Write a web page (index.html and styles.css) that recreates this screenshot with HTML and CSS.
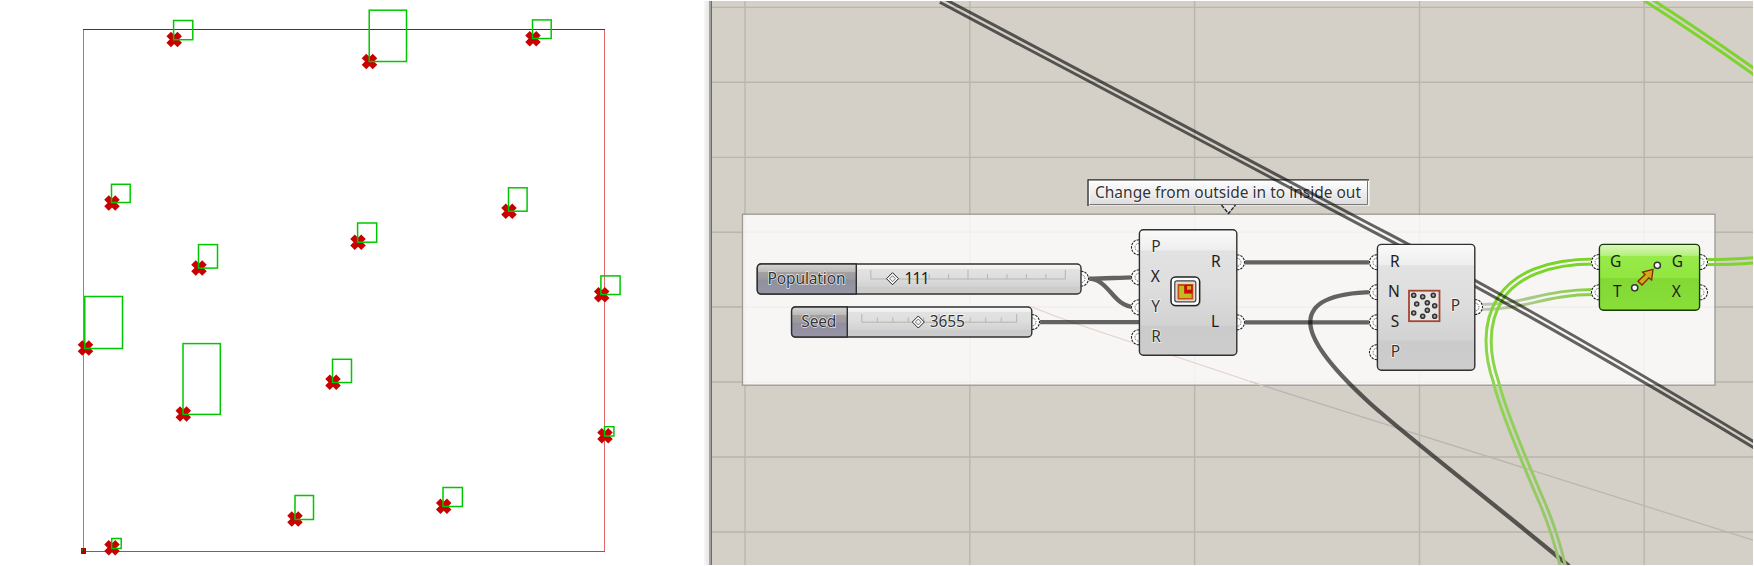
FILE: index.html
```html
<!DOCTYPE html>
<html lang="en">
<head>
<meta charset="utf-8">
<title>Populate and move definition</title>
<link rel="stylesheet" href="styles.css">
</head>
<body>
<main class="workspace">
  <section class="viewport">
    <svg class="scene" viewBox="0 0 704 566">
      <defs><path id="mark" d="M-5.5-5.5L5.5 5.5M5.5-5.5L-5.5 5.5"/></defs>
      <path class="frame-top" d="M83 29.5H605"/>
      <path class="frame-side" d="M83.5 30V551"/>
      <path class="frame-side right" d="M604.5 30V552"/>
      <path class="frame-bottom" d="M83 551.5H605"/>
      <g class="marks">
        <use href="#mark" x="174.2" y="39.5"/><use href="#mark" x="112" y="203"/><use href="#mark" x="199" y="268"/>
        <use href="#mark" x="369.5" y="61.5"/><use href="#mark" x="533" y="38.7"/><use href="#mark" x="509" y="211.3"/>
        <use href="#mark" x="358" y="242.3"/><use href="#mark" x="601.7" y="294.8"/><use href="#mark" x="85.5" y="348"/>
        <use href="#mark" x="183.3" y="414"/><use href="#mark" x="333" y="382.2"/><use href="#mark" x="295" y="519"/>
        <use href="#mark" x="112" y="547.7"/><use href="#mark" x="605" y="435.8"/><use href="#mark" x="443.7" y="506.3"/>
      </g>
      <g class="boxes">
        <rect x="173.6" y="20.5" width="19.2" height="19.2"/><rect x="111.5" y="184.3" width="18.7" height="18.2"/>
        <rect x="198.5" y="244.6" width="19" height="23.5"/><rect x="369.2" y="10.2" width="37.3" height="51.3"/>
        <rect x="532.5" y="19.9" width="18.7" height="18.6"/><rect x="508.5" y="187.8" width="18.6" height="23.4"/>
        <rect x="357.6" y="223" width="19.1" height="19.2"/><rect x="600.9" y="275.9" width="19.2" height="18.6"/>
        <rect x="84.8" y="296.5" width="37.7" height="52"/><rect x="183" y="343.6" width="37.3" height="70.8"/>
        <rect x="332.5" y="359.3" width="19" height="23.2"/><rect x="295" y="495.5" width="18.5" height="24"/>
        <rect x="111.7" y="538.5" width="9.5" height="10"/><rect x="604.5" y="426.7" width="9.4" height="9.3"/>
        <rect x="443" y="487.5" width="19.4" height="19"/>
      </g>
      <rect class="origin" x="81" y="548" width="5" height="6"/><rect class="origin-dot" x="82" y="549" width="1" height="2"/>
    </svg>
  </section>
  <div class="splitter"></div>
  <section class="canvas">
    <svg class="graph" viewBox="712 1 1041 564">
      <defs>
        <linearGradient id="silver" x2="0" y2="1"><stop offset="0" stop-color="#fafafa"/><stop offset=".16" stop-color="#eee"/><stop offset=".17" stop-color="#e2e2e2"/><stop offset=".45" stop-color="#dedede"/><stop offset=".76" stop-color="#d2d2d2"/><stop offset=".77" stop-color="#cbcbcb"/><stop offset="1" stop-color="#cdcdcd"/></linearGradient>
        <linearGradient id="label" x2="0" y2="1"><stop offset="0" stop-color="#d5d5d5"/><stop offset=".25" stop-color="#bcbcbc"/><stop offset=".27" stop-color="#a5a1a1"/><stop offset=".5" stop-color="#9b98a0"/><stop offset=".55" stop-color="#918f9e"/><stop offset="1" stop-color="#9796a6"/></linearGradient>
        <linearGradient id="lime" x2="0" y2="1"><stop offset="0" stop-color="#dcf8be"/><stop offset=".17" stop-color="#b6ef7e"/><stop offset=".18" stop-color="#97ea49"/><stop offset=".51" stop-color="#92e63f"/><stop offset=".52" stop-color="#83d835"/><stop offset="1" stop-color="#89df38"/></linearGradient>
        <linearGradient id="tip" x2="0" y2="1"><stop offset="0" stop-color="#fff"/><stop offset="1" stop-color="#dcdcdc"/></linearGradient>
        <linearGradient id="wireDown" gradientUnits="userSpaceOnUse" x1="0" y1="260" x2="0" y2="565"><stop offset="0" stop-color="#7ad426"/><stop offset=".35" stop-color="#8cd64d"/><stop offset="1" stop-color="#9bc372"/></linearGradient>
        <linearGradient id="wireAcross" gradientUnits="userSpaceOnUse" x1="1480" y1="0" x2="1594" y2="0"><stop offset="0" stop-color="#c4c4bf"/><stop offset="1" stop-color="#84d23d"/></linearGradient>
        <path id="wDark" d="M941 0C1079 73 1234 156 1389 237C1499 295 1640 376 1756 446"/>
        <path id="wDown" d="M1594 261.5C1548 261.5 1515 275 1500 299C1484 324 1487 356 1496 382C1503 412 1526 465 1541 500Q1555 532 1563 567"/>
        <path id="wAcross" d="M1481 307C1525 307 1545 292 1594 292"/>
        <path id="wOut" d="M1706 262Q1735 262 1756 260"/>
        <path id="wTop" d="M1645 -2Q1700 33 1756 73"/>
        <mask id="mDark" maskUnits="userSpaceOnUse" x="712" y="0" width="1042" height="566"><use href="#wDark" class="outer"/><use href="#wDark" class="inner"/></mask>
        <mask id="mDown" maskUnits="userSpaceOnUse" x="712" y="0" width="1042" height="566"><use href="#wDown" class="outer"/><use href="#wDown" class="inner"/></mask>
        <mask id="mLime" maskUnits="userSpaceOnUse" x="712" y="0" width="1042" height="566"><use href="#wOut" class="outer"/><use href="#wTop" class="outer"/><use href="#wOut" class="inner"/><use href="#wTop" class="inner"/></mask>
        <mask id="mAcross" maskUnits="userSpaceOnUse" x="712" y="0" width="1042" height="566"><use href="#wAcross" class="outer"/><use href="#wAcross" class="inner"/></mask>
        <g id="portL"><path class="port" d="M0-7.5A7.5 7.5 0 0 0 0 7.5Z"/><path class="port-edge" d="M0-7.5A7.5 7.5 0 0 0 0 7.5"/><path class="port-ring" d="M0-4A4 4 0 0 0 0 4"/></g>
        <g id="portR"><path class="port" d="M0-7.5A7.5 7.5 0 0 1 0 7.5Z"/><path class="port-edge" d="M0-7.5A7.5 7.5 0 0 1 0 7.5"/><path class="port-ring" d="M0-4A4 4 0 0 1 0 4"/></g>
        <g id="knob"><path class="knob" d="M0-6L6 0L0 6L-6 0Z"/><path class="knob-core" d="M0-3L3 0L0 3L-3 0Z"/></g>
        <circle id="dot" class="dot" r="2"/>
      </defs>

      <path class="grid" d="M745 0V566M969.8 0V566M1194.6 0V566M1419.5 0V566M1644.2 0V566M712 7.4H1754M712 82.2H1754M712 157.4H1754M712 232.2H1754M712 307H1754M712 382H1754M712 457H1754M712 532H1754"/>
      <rect class="group" x="742.5" y="214.2" width="972.5" height="171"/>
      <path class="hair" d="M1250 381.5L1756 541"/>
      <path class="hair pink" d="M1031 306.5Q1060 319 1140 345T1262 385.5"/>

      <rect class="tip" x="1088" y="180" width="281" height="25"/>
      <path class="tip-edge" d="M1088 206V179.8H1369"/>
      <path class="tip-light" d="M1089.5 204V181.5H1367.5"/>
      <path class="tip-shade" d="M1089.5 204.5H1367.5V181"/>
      <path class="tip-tail" d="M1221.5 205L1228.5 213.5L1235.5 205"/>
      <text class="label soft" x="1095" y="197.7" textLength="266">Change from outside in to inside out</text>

      <g class="wires">
        <path d="M1088 278.7C1105 278.7 1118 277.5 1135 277.3M1088 278.7C1110 279 1112 306 1134 307"/>
        <path d="M1038 322.2H1139M1243 262.3H1372M1243 322.3H1372"/>
        <path d="M1373 292.2C1333 293 1310.5 302 1310.3 322C1310 346 1348 383 1367 400.5C1396 428 1487 498 1569 566"/>
      </g>
      <rect mask="url(#mAcross)" x="712" y="0" width="1042" height="566" fill="url(#wireAcross)"/>
      <rect mask="url(#mDown)" x="712" y="0" width="1042" height="566" fill="url(#wireDown)"/>
      <rect mask="url(#mLime)" x="712" y="0" width="1042" height="566" fill="#7ed32d"/>
      <rect mask="url(#mDark)" x="712" y="0" width="1042" height="566" fill="#000" opacity=".6"/>

      <use href="#portR" x="1081" y="278.7"/><use href="#portR" x="1032" y="322"/>
      <rect class="node" x="757.3" y="264" width="323.7" height="30"/>
      <path class="name" d="M856.3 264V294H761.3Q757.3 294 757.3 290V268Q757.3 264 761.3 264Z"/>
      <path class="ruler" d="M870.8 270V279H1065.3V270M968 270V279M890.3 274V279M909.7 274V279M929.2 274V279M948.6 274V279M987.5 274V279M1007 274V279M1026.4 274V279M1045.9 274V279"/>
      <use href="#knob" x="892.5" y="278.7"/>
      <text class="label soft" x="767.5" y="283.8" textLength="78">Population</text>
      <text class="label" x="904.5" y="283.8" textLength="25">111</text>

      <rect class="node" x="791.6" y="307" width="240.2" height="30"/>
      <path class="name" d="M847.3 307V337H795.6Q791.6 337 791.6 333V311Q791.6 307 795.6 307Z"/>
      <path class="ruler" d="M861.8 314V322.2H1016.7V314M939.2 314V322.2M877.3 317.5V322.2M892.8 317.5V322.2M908.3 317.5V322.2M923.7 317.5V322.2M954.7 317.5V322.2M970.2 317.5V322.2M985.7 317.5V322.2M1001.2 317.5V322.2"/>
      <use href="#knob" x="918.3" y="322"/>
      <text class="label soft" x="801.3" y="326.8" textLength="35">Seed</text>
      <text class="label soft" x="929.8" y="326.8" textLength="35">3655</text>

      <use href="#portL" x="1139" y="247.3"/><use href="#portL" x="1139" y="277.3"/><use href="#portL" x="1139" y="307.3"/><use href="#portL" x="1139" y="337.3"/>
      <use href="#portR" x="1237" y="262.3"/><use href="#portR" x="1237" y="322.3"/>
      <rect class="node" x="1139.4" y="229.7" width="97.4" height="125.6"/>
      <g class="label"><text class="soft" x="1151.3" y="252">P</text><text x="1150.7" y="282">X</text><text class="soft" x="1151.3" y="312">Y</text><text class="soft" x="1151.3" y="341.8">R</text><text x="1211" y="266.8">R</text><text x="1211" y="327.2">L</text></g>
      <rect class="icon-shadow" x="1171.5" y="277.5" width="29.5" height="29.5" rx="5"/>
      <rect class="icon-frame" x="1171" y="277" width="28.5" height="28.5" rx="4.5"/>
      <rect class="icon-glow" x="1173" y="279" width="24.5" height="24.5" rx="3"/>
      <rect class="icon-core" x="1174.8" y="280.8" width="21" height="21" rx="2"/>
      <rect x="1177.5" y="284" width="15.8" height="15.5" fill="#cc4b12"/><rect x="1184.5" y="285" width="8" height="8.3" fill="#c90a05"/>
      <path d="M1179.2 286H1184V293.8H1191.5V298H1179.2Z" fill="#bdbd22"/><rect x="1187" y="286" width="4.2" height="3.7" fill="#c8ae1e"/>

      <use href="#portL" x="1377" y="262.2"/><use href="#portL" x="1377" y="292.2"/><use href="#portL" x="1377" y="322.2"/><use href="#portL" x="1377" y="352.2"/><use href="#portR" x="1475" y="307"/>
      <rect class="node" x="1377.4" y="244.4" width="97.4" height="125.8"/>
      <g class="label"><text x="1390" y="267">R</text><text x="1388" y="297">N</text><text x="1390.7" y="327">S</text><text class="soft" x="1390.7" y="356.8">P</text><text class="soft" x="1450.7" y="311.3">P</text></g>
      <rect class="field" x="1409" y="290.7" width="30.5" height="30.5"/>
      <use href="#dot" x="1413.7" y="295.2"/><use href="#dot" x="1422.7" y="296.7"/><use href="#dot" x="1433.3" y="295.3"/><use href="#dot" x="1416.7" y="304"/><use href="#dot" x="1427.3" y="302.7"/><use href="#dot" x="1434.7" y="305.7"/><use href="#dot" x="1427.3" y="310.3"/><use href="#dot" x="1413.7" y="313"/><use href="#dot" x="1422.7" y="316.3"/><use href="#dot" x="1434.7" y="316.3"/>

      <use href="#portL" x="1599" y="262"/><use href="#portL" x="1599" y="292.3"/><use href="#portR" x="1700" y="262"/><use href="#portR" x="1700" y="292.3"/>
      <rect class="node lime" x="1599.4" y="244.4" width="100.2" height="65.8"/>
      <g class="label"><text x="1610" y="267">G</text><text x="1613" y="296.9">T</text><text x="1671.7" y="267">G</text><text x="1671.7" y="296.9">X</text></g>
      <path class="arrow" d="M1638 281.3L1645 274.5L1642.5 272L1653 269.3L1651.6 280L1649 277.8L1642 285Z"/>
      <circle class="end" cx="1657.3" cy="265.3" r="3.1"/><circle class="end" cx="1634.7" cy="287.8" r="3.1"/>
    </svg>
  </section>
</main>
</body>
</html>
```
FILE: styles.css
```css
body { margin: 0; background: #fff; }
.workspace { display: flex; width: 1754px; height: 566px; overflow: hidden; }
.viewport { flex: 0 0 704px; }
.scene, .graph { display: block; width: 100%; height: 100%; }
.splitter { flex: 0 0 8px; margin: 1px 0; background: linear-gradient(90deg, #f4f4f2 0 2px, #ebebe9 2px 5px, #a0a0a0 5px 7px, #6c6c6c 7px); }
.canvas { flex: 0 0 1041px; margin: 1px 0; background: #d4d0c8; }
.frame-top { stroke: #c80000; }
.frame-side { stroke: #d46a6e; }
.frame-side.right { stroke: #e06868; }
.frame-bottom { stroke: #d83a3a; }
.marks { stroke: #c80000; stroke-width: 6.4; }
.boxes { fill: none; stroke: #00c800; stroke-width: 1.5; }
.origin { fill: #b40000; }
.origin-dot { fill: #0a8a00; }
.grid { fill: none; stroke: #44443a; stroke-opacity: .19; stroke-width: 1.4; }
.group { fill: #fff; fill-opacity: .8; stroke: #999894; stroke-width: 1.3; }
.hair { fill: none; stroke: #b9b5ad; stroke-width: 1.2; }
.hair.pink { stroke: #e6d0ce; }
.wires { fill: none; stroke: #000; stroke-opacity: .6; stroke-width: 4.3; }
.outer { fill: none; stroke: #fff; stroke-width: 8.2; }
.inner { fill: none; stroke: #000; stroke-width: 2.2; }
.port { fill: #fff; stroke: #fff; stroke-width: 1.5; }
.port-edge { fill: none; stroke: #222; stroke-width: 1.1; stroke-dasharray: 2.5 1; }
.port-ring { fill: none; stroke: #555; stroke-width: .9; stroke-dasharray: 1.5 1; }
.node { fill: url(#silver); stroke: #303030; stroke-width: 1.4; rx: 4px; }
.node.lime { fill: url(#lime); stroke: #173c08; }
.name { fill: url(#label); stroke: #303030; stroke-width: 1.4; }
.ruler { fill: none; stroke: #b5b5ad; stroke-width: 1; }
.knob { fill: #fff; stroke: #222; stroke-width: 1; }
.knob-core { fill: #eee; stroke: #555; stroke-width: .8; }
.label { font: 15.5px "Noto Sans", "Open Sans", sans-serif; fill: #1c1c1c; }
.soft { fill: #333; stroke: #fff; stroke-opacity: .8; stroke-width: 1.4px; paint-order: stroke; }
.tip { fill: url(#tip); stroke: #fff; stroke-width: 1; }
.tip-edge { fill: none; stroke: #222; stroke-width: 1.3; }
.tip-light { fill: none; stroke: #fff; stroke-width: 1; }
.tip-shade { fill: none; stroke: #777; stroke-width: 1; }
.tip-tail { fill: #e4e4e4; stroke: #222; stroke-width: 1.4; stroke-dasharray: 4 1; }
.icon-shadow { fill: #b4b4ae; }
.icon-frame { fill: #fff; stroke: #222; stroke-width: 1.5; }
.icon-glow { fill: none; stroke: #fff; stroke-width: 2; }
.icon-core { fill: #dedbd5; stroke: #444; stroke-width: 1.2; }
.field { fill: #e6e4e3; stroke: #a54430; stroke-width: 1.8; }
.dot { fill: #aaa; stroke: #333; stroke-width: 1.6; }
.arrow { fill: #cfaa16; stroke: #86270c; stroke-width: 1.3; }
.end { fill: #fff; stroke: #35353a; stroke-width: 1.5; }
```
